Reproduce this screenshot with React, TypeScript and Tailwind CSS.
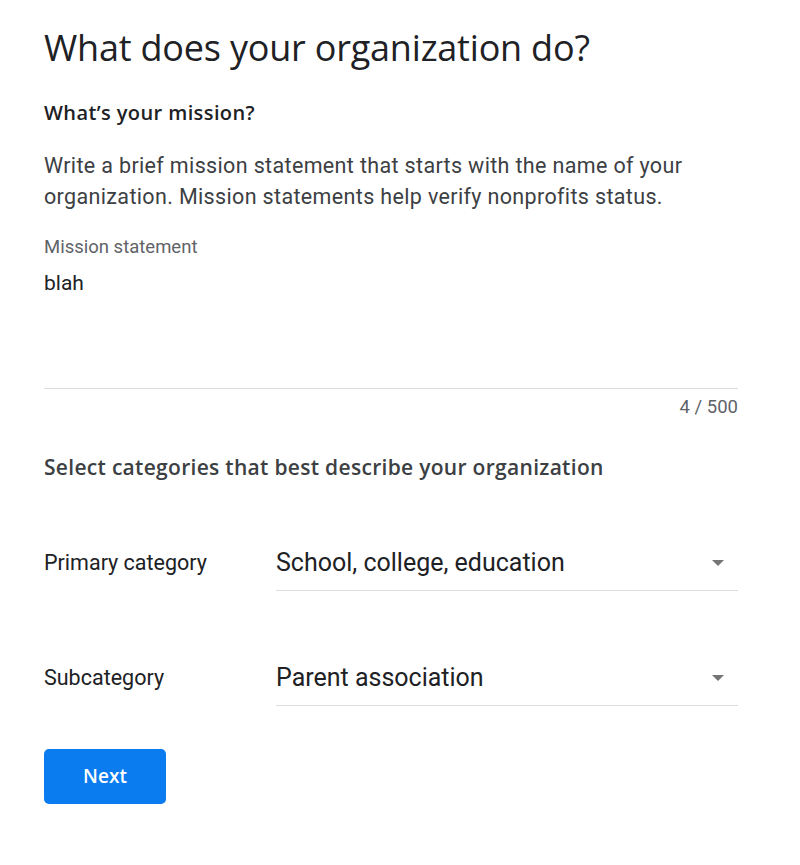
import { useState } from 'react'

const heading = { fontFamily: '"Open Sans", "Noto Sans", sans-serif' }
const body = { fontFamily: 'Roboto, "Liberation Sans", sans-serif' }

function SelectRow({ label, value }: { label: string, value: string }) {
    return (
        <div className="flex items-end h-[60px]">
            <div className="w-[232px] pb-[12px] text-[21.5px] text-[#202124]">{label}</div>
            <div className="flex-1 flex items-center justify-between h-[56px] border-b border-[#dadce0]">
                <span className="text-[25px] text-[#202124]">{value}</span>
                <svg width="12" height="6" viewBox="0 0 12 6" className="mr-[14px]">
                    <path d="M0 0h12L6 6z" fill="#757575" />
                </svg>
            </div>
        </div>
    )
}

export default function App() {
    const [mission] = useState('blah')

    return (
        <div className="min-h-screen bg-white px-[44px] pt-[22px] w-[782px]" style={body}>
            <h1 className="text-[36px] leading-[52px] text-[#202124] tracking-[-0.2px]" style={heading}>What does your organization do?</h1>
            <h2 className="mt-[24px] text-[20px] font-semibold text-[#202124] tracking-[0.4px]" style={heading}>What’s your mission?</h2>
            <p className="mt-[22px] text-[21.5px] leading-[31px] text-[#3c4043] tracking-[0.35px]">
                Write a brief mission statement that starts with the name of your organization. Mission statements help verify nonprofits status.
            </p>

            <div className="mt-[22px]">
                <div className="text-[18.5px] text-[#5f6368]">Mission statement</div>
                <div className="mt-[6px] h-[121px] border-b border-[#dadce0] text-[21px] text-[#202124]">{mission}</div>
                <div className="mt-[5px] text-right text-[18.5px] text-[#5f6368]">{mission.length} / 500</div>
            </div>

            <h2 className="mt-[30px] text-[21px] font-semibold text-[#3c4043] tracking-[0.3px]" style={heading}>Select categories that best describe your organization</h2>

            <div className="mt-[48px] flex flex-col gap-[55px]">
                <SelectRow label="Primary category" value="School, college, education" />
                <SelectRow label="Subcategory" value="Parent association" />
            </div>

            <button className="mt-[43px] w-[122px] h-[55px] rounded-[5px] bg-[#0b7cf0] text-white text-[19px] font-semibold" style={heading}>Next</button>
        </div>
    )
}
